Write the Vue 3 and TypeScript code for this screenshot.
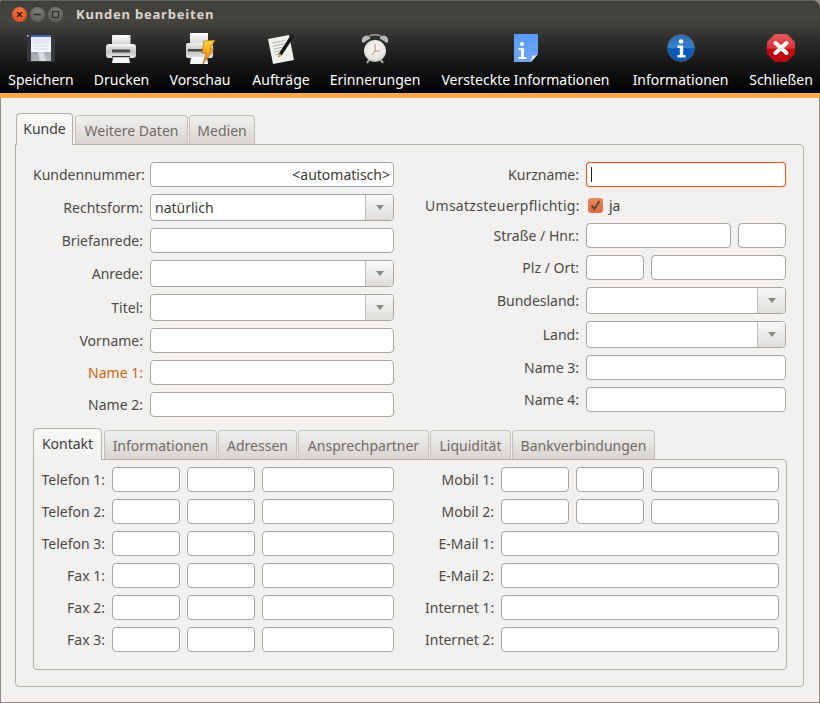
<script setup lang="ts">
interface Row { label: string; kind: 'input' | 'combo' | 'check' | 'multi'; value?: string; accent?: boolean; focus?: boolean; right?: boolean; wide?: boolean; fields?: number[] }

const outerTabs = [
  { label: 'Kunde', w: 57, active: true },
  { label: 'Weitere Daten', w: 113 },
  { label: 'Medien', w: 66 },
]
const innerTabs = [
  { label: 'Kontakt', w: 69, active: true },
  { label: 'Informationen', w: 113 },
  { label: 'Adressen', w: 79 },
  { label: 'Ansprechpartner', w: 131 },
  { label: 'Liquidität', w: 81 },
  { label: 'Bankverbindungen', w: 143 },
]
const leftRows: Row[] = [
  { label: 'Kundennummer:', kind: 'input', value: '<automatisch>', right: true },
  { label: 'Rechtsform:', kind: 'combo', value: 'natürlich' },
  { label: 'Briefanrede:', kind: 'input' },
  { label: 'Anrede:', kind: 'combo' },
  { label: 'Titel:', kind: 'combo' },
  { label: 'Vorname:', kind: 'input' },
  { label: 'Name 1:', kind: 'input', accent: true },
  { label: 'Name 2:', kind: 'input' },
]
const rightRows: Row[] = [
  { label: 'Kurzname:', kind: 'input', focus: true },
  { label: 'Umsatzsteuerpflichtig:', kind: 'check', wide: true },
  { label: 'Straße / Hnr.:', kind: 'multi', fields: [145, 48] },
  { label: 'Plz / Ort:', kind: 'multi', fields: [58, 135] },
  { label: 'Bundesland:', kind: 'combo' },
  { label: 'Land:', kind: 'combo' },
  { label: 'Name 3:', kind: 'input' },
  { label: 'Name 4:', kind: 'input' },
]
const contactLeft = [
  { label: 'Telefon 1:', fields: [68, 68, 132] },
  { label: 'Telefon 2:', fields: [68, 68, 132] },
  { label: 'Telefon 3:', fields: [68, 68, 132] },
  { label: 'Fax 1:', fields: [68, 68, 132] },
  { label: 'Fax 2:', fields: [68, 68, 132] },
  { label: 'Fax 3:', fields: [68, 68, 132] },
]
const contactRight = [
  { label: 'Mobil 1:', fields: [68, 68, 128] },
  { label: 'Mobil 2:', fields: [68, 68, 128] },
  { label: 'E-Mail 1:', fields: [278] },
  { label: 'E-Mail 2:', fields: [278] },
  { label: 'Internet 1:', fields: [278] },
  { label: 'Internet 2:', fields: [278] },
]
</script>

<template>
  <div class="window">
    <header class="chrome">
      <div class="titlebar">
        <div class="controls">
          <span class="ctl close">
            <svg width="15" height="15" viewBox="0 0 15 15"><path d="M5 5l5 5M10 5l-5 5" stroke="#3a1408" stroke-width="1.4" fill="none" /></svg>
          </span>
          <span class="ctl">
            <svg width="15" height="15" viewBox="0 0 15 15"><path d="M4 7.5h7" stroke="#2e2d2a" stroke-width="1.6" fill="none" /></svg>
          </span>
          <span class="ctl">
            <svg width="15" height="15" viewBox="0 0 15 15"><rect x="4.5" y="4.5" width="6" height="6" stroke="#2e2d2a" stroke-width="1.3" fill="none" /></svg>
          </span>
        </div>
        <div class="title">Kunden bearbeiten</div>
      </div>
      <nav class="toolbar">
        <div class="tool">
          <svg class="ico" viewBox="0 0 32 32">
            <defs>
              <linearGradient id="fl" x1="0" y1="0" x2="0" y2="1"><stop offset="0" stop-color="#e6ebf4" /><stop offset="1" stop-color="#f6f7fa" /></linearGradient>
              <linearGradient id="fs" x1="0" y1="0" x2="1" y2="1"><stop offset="0" stop-color="#9da1a7" /><stop offset="1" stop-color="#b9bcc1" /></linearGradient>
            </defs>
            <path d="M3 2h25.500a1.500 1.500 0 0 1 1.500 1.500v24a1.500 1.500 0 0 1-1.500 1.500h-25a1.500 1.500 0 0 1-1.500-1.500v-24z" fill="#34373c" />
            <rect x="6" y="2" width="20" height="17" fill="url(#fl)" />
            <rect x="6" y="2" width="20" height="2" fill="#3f6cab" />
            <path d="M8 7h16M8 10h16M8 13h16M8 16h16" stroke="#d5dcea" stroke-width="1" />
            <rect x="6" y="19" width="20" height="9" fill="url(#fs)" />
            <path d="M13 19h6l2 9h-6z" fill="#d6dbe6" />
            <rect x="2" y="2" width="1.500" height="1.500" fill="#c5c8cd" />
          </svg>
          <span>Speichern</span>
        </div>
        <div class="tool">
          <svg class="ico" viewBox="0 0 32 32">
            <defs>
              <linearGradient id="pb" x1="0" y1="0" x2="0" y2="1"><stop offset="0" stop-color="#f1f1f0" /><stop offset=".55" stop-color="#c2c2c0" /><stop offset="1" stop-color="#e6e6e4" /></linearGradient>
              <linearGradient id="pp" x1="0" y1="0" x2="0" y2="1"><stop offset="0" stop-color="#ffffff" /><stop offset="1" stop-color="#cfcfcf" /></linearGradient>
            </defs>
            <rect x="6" y="2" width="18.500" height="11" rx="1" fill="url(#pp)" />
            <rect x="0" y="11" width="30" height="14" rx="3" fill="url(#pb)" />
            <rect x="6" y="16.500" width="18" height="3" fill="#4a4a48" />
            <rect x="2" y="12" width="26" height="1" fill="#fff" opacity=".7" />
            <rect x="6" y="23" width="18" height="1.500" fill="#333" />
            <path d="M7 24.500h16l1 5.500h-18z" fill="#f7f7f7" />
          </svg>
          <span>Drucken</span>
        </div>
        <div class="tool">
          <svg class="ico" viewBox="0 0 32 32">
            <defs>
              <linearGradient id="pv" x1="0" y1="0" x2="0" y2="1"><stop offset="0" stop-color="#ffd53a" /><stop offset=".6" stop-color="#f59a18" /><stop offset="1" stop-color="#e57a10" /></linearGradient>
            </defs>
            <rect x="6" y="0" width="18" height="12" fill="url(#pp)" />
            <rect x="2" y="10" width="27" height="15" rx="2" fill="url(#pb)" />
            <rect x="4" y="16" width="22" height="2.500" fill="#4a4a48" />
            <path d="M7 24h16l1 7h-18z" fill="#f7f7f7" />
            <path d="M20 8l11-1-5 9h4l-11 15 3-11h-4z" fill="url(#pv)" stroke="#a85a10" stroke-width=".6" />
          </svg>
          <span>Vorschau</span>
        </div>
        <div class="tool">
          <svg class="ico" viewBox="0 0 32 32">
            <path d="M3 6L24 2l5 25-21 4z" fill="#f0f1ed" />
            <path d="M7 10l13-2.500M8 13l13-2.500M8.500 16l9-1.700M9 19l7-1.300M10 22l4-.8" stroke="#a9aba6" stroke-width=".9" />
            <path d="M26.500 1l3 2L17 22l-3.500 2.500.4-4z" fill="#16161a" />
            <path d="M14 20.500l3 1.700-3.500 2.300-1 1.500z" fill="#d9b36a" />
            <path d="M25.500 2.500l2.500 1.700" stroke="#555" stroke-width=".6" />
          </svg>
          <span>Aufträge</span>
        </div>
        <div class="tool">
          <svg class="ico" viewBox="0 0 32 32">
            <defs>
              <radialGradient id="cl" cx=".5" cy=".4" r=".6"><stop offset="0" stop-color="#fbfaf8" /><stop offset=".8" stop-color="#e6e4df" /><stop offset="1" stop-color="#b0aeaa" /></radialGradient>
            </defs>
            <path d="M11 5a4 4 0 0 0-7 4.500zM21 5a4 4 0 0 1 7 4.500z" fill="#b5b5b3" stroke="#ddd" stroke-width=".8" />
            <path d="M9 4c2-3 12-3 14 0" stroke="#9e9e9c" stroke-width="1.300" fill="none" />
            <path d="M10 27l-2 3M22 27l2 3" stroke="#b5b5b3" stroke-width="2" />
            <circle cx="16" cy="18" r="11" fill="url(#cl)" />
            <path d="M16 11v7h5M16 18l-3 4" stroke="#c87a74" stroke-width="1" fill="none" />
          </svg>
          <span>Erinnerungen</span>
        </div>
        <div class="tool">
          <svg class="ico" viewBox="0 0 32 32">
            <defs>
              <linearGradient id="nt" x1="0" y1="0" x2="0" y2="1"><stop offset="0" stop-color="#5a9bf6" /><stop offset="1" stop-color="#6ea9f5" /></linearGradient>
            </defs>
            <path d="M4 1h24v20l-7 8H4z" fill="url(#nt)" />
            <path d="M28 21c-2 2-5 2-6 1 0 2-.5 5-1 7z" fill="#e8e8e6" />
            <circle cx="12" cy="11" r="2.100" fill="#fff" />
            <path d="M8.500 15h5.500v9h2.500v2h-8v-2h2.500v-7h-2.500z" fill="#fff" />
          </svg>
          <span>Versteckte Informationen</span>
        </div>
        <div class="tool">
          <svg class="ico" viewBox="0 0 32 32">
            <defs>
              <linearGradient id="ib" x1="0" y1="0" x2="0" y2="1"><stop offset="0" stop-color="#2f6cb3" /><stop offset=".5" stop-color="#3a80cc" /><stop offset=".52" stop-color="#0a5cc0" /><stop offset="1" stop-color="#0b55a8" /></linearGradient>
            </defs>
            <circle cx="16" cy="15" r="13.500" fill="url(#ib)" stroke="#5d6f83" stroke-width=".6" />
            <circle cx="16" cy="8.500" r="2.300" fill="#fff" />
            <path d="M12.500 12.500h5.700v9.500h2.300v2.500h-8v-2.500h2.300v-7h-2.300z" fill="#fff" />
          </svg>
          <span>Informationen</span>
        </div>
        <div class="tool">
          <svg class="ico" viewBox="0 0 32 32">
            <defs>
              <linearGradient id="rd" x1="0" y1="0" x2="0" y2="1"><stop offset="0" stop-color="#e05a5e" /><stop offset=".5" stop-color="#d8343a" /><stop offset=".55" stop-color="#c3060e" /><stop offset="1" stop-color="#b50a10" /></linearGradient>
            </defs>
            <path d="M10 1h12l8 8v12l-8 8H10l-8-8V9z" fill="url(#rd)" />
            <path d="M10.500 10l11 10M21.500 10L10.500 20" stroke="#fff" stroke-width="4" stroke-linecap="round" />
          </svg>
          <span>Schließen</span>
        </div>
      </nav>
      <div class="band"></div>
    </header>

    <main class="body">
      <div class="tabs">
        <div v-for="t in outerTabs" :key="t.label" class="tab" :class="{ active: t.active }" :style="{ width: t.w + 'px' }">{{ t.label }}</div>
      </div>
      <section class="panel outer">
        <div class="form">
          <div class="col col-left">
            <template v-for="r in leftRows" :key="r.label">
              <label class="lbl" :class="{ accent: r.accent }">{{ r.label }}</label>
              <div v-if="r.kind === 'combo'" class="combo">
                <span class="combo-text">{{ r.value }}</span>
                <span class="combo-btn"><i class="arrow"></i></span>
              </div>
              <div v-else class="input" :class="{ right: r.right }">{{ r.value }}</div>
            </template>
          </div>
          <div class="col col-right">
            <template v-for="r in rightRows" :key="r.label">
              <label class="lbl" :class="{ wide: r.wide }">{{ r.label }}</label>
              <div v-if="r.kind === 'combo'" class="combo">
                <span class="combo-text"></span>
                <span class="combo-btn"><i class="arrow"></i></span>
              </div>
              <div v-else-if="r.kind === 'check'" class="check-row">
                <span class="check">
                  <svg width="15" height="15" viewBox="0 0 15 15"><path d="M3.500 7.500l3 3.500 5-8" stroke="#5a453a" stroke-width="2" fill="none" /></svg>
                </span>
                <span>ja</span>
              </div>
              <div v-else-if="r.kind === 'multi'" class="multi">
                <div v-for="(w, i) in r.fields" :key="i" class="input" :style="{ width: w + 'px' }"></div>
              </div>
              <div v-else class="input" :class="{ focus: r.focus }"><i v-if="r.focus" class="caret"></i></div>
            </template>
          </div>
        </div>

        <div class="tabs inner-tabs">
          <div v-for="t in innerTabs" :key="t.label" class="tab" :class="{ active: t.active }" :style="{ width: t.w + 'px' }">{{ t.label }}</div>
        </div>
        <section class="panel inner">
          <div class="contact">
            <div class="ccol ccol-left">
              <template v-for="r in contactLeft" :key="r.label">
                <label class="lbl">{{ r.label }}</label>
                <div class="multi">
                  <div v-for="(w, i) in r.fields" :key="i" class="input" :style="{ width: w + 'px' }"></div>
                </div>
              </template>
            </div>
            <div class="ccol ccol-right">
              <template v-for="r in contactRight" :key="r.label">
                <label class="lbl">{{ r.label }}</label>
                <div class="multi">
                  <div v-for="(w, i) in r.fields" :key="i" class="input" :style="{ width: w + 'px' }"></div>
                </div>
              </template>
            </div>
          </div>
        </section>
      </section>
    </main>
  </div>
</template>

<style>
html, body { margin: 0; background: #8f8c86; }
</style>

<style scoped>
.window {
  width: 820px;
  height: 703px;
  display: flex;
  flex-direction: column;
  box-sizing: border-box;
  overflow: hidden;
  font-family: "Noto Sans", "Open Sans", sans-serif;
  font-size: 14px;
  color: #3c3c3c;
  background: #f2f1f0;
  border-radius: 3px 8px 0 0;
}
.chrome {
  background: linear-gradient(#3f3e3a 0, #47453f 20px, #3a3936 30px, #2b2b2a 42px, #161616 65px, #000 92px);
  box-shadow: inset 0 1px 0 #65635d;
}
.titlebar { height: 28px; display: flex; align-items: center; position: relative; }
.controls { display: flex; gap: 3px; margin-left: 12px; }
.ctl {
  width: 15px; height: 15px; border-radius: 50%;
  background: radial-gradient(circle at 50% 30%, #807f79, #565550);
  display: block; margin-top: 1px;
}
.ctl svg { display: block; }
.close { background: radial-gradient(circle at 50% 30%, #f47a45, #d8431c); }
.title {
  margin-left: 13px; font-weight: 700; font-size: 13px; letter-spacing: .8px; color: #d9d5cb;
}
.toolbar {
  display: grid;
  grid-template-columns: 66px 55px 62px 60px 88px 173px 97px 64px;
  column-gap: 20px;
  padding: 5px 0 0 8px;
  height: 65px;
  box-sizing: border-box;
}
.tool {
  display: flex; flex-direction: column; align-items: center;
  color: #fff; white-space: nowrap; font-size: 14px; line-height: 20px;
}
.ico { width: 32px; height: 32px; display: block; margin-bottom: 5px; filter: blur(.3px); }
.band { height: 5px; background: #fba94b; }
.body {
  flex: 1; display: flex; flex-direction: column; min-height: 0;
  padding: 15px 15px 15px 14px;
  border: solid #8f8c86;
  border-width: 0 1px 1px 1px;
}
.tabs { display: flex; gap: 1px; align-items: flex-end; margin-left: 1px; position: relative; z-index: 1; }
.tab {
  box-sizing: border-box;
  height: 29px;
  text-align: center;
  line-height: 29px;
  border: 1px solid #c3c0bb;
  border-bottom: 0;
  border-radius: 4px 4px 0 0;
  background: linear-gradient(#f1f0ef, #d8d5d1);
  color: #6f6b66;
  white-space: nowrap;
}
.tab.active {
  height: 32px; line-height: 30px; color: #3c3c3c;
  background: linear-gradient(#f9f9f8, #f2f1f0);
  border-color: #b3b0ab;
  margin-bottom: -1px;
  margin-right: 1px;
}
.panel {
  border: 1px solid #b3b0ab;
  border-radius: 0 4px 4px 4px;
  box-sizing: border-box;
}
.outer { flex: 1; padding: 17px 17px 0 17px; }
.form { display: flex; gap: 31px; height: 266px; }
.col { display: grid; align-content: start; column-gap: 7px; row-gap: 7px; width: 361px; }
.col-left { grid-template-columns: 110px 244px; }
.col-right { grid-template-columns: 154px 200px; }
.lbl { text-align: right; align-self: center; white-space: nowrap; color: #4c4a47; }
.lbl.accent { color: #ca6610; }
.lbl.wide { letter-spacing: .28px; }
.input {
  box-sizing: border-box; height: 25px;
  border: 1px solid #aaa69f; border-radius: 4px;
  background: #fff; padding: 0 3px 0 4px;
  line-height: 23px; color: #3c3c3c; white-space: nowrap;
}
.input.right { text-align: right; }
.input.focus { border-color: #dd5c2a; display: flex; align-items: center; box-shadow: 0 0 1px #dd5c2a; }
.caret { width: 1px; height: 15px; background: #222; display: block; }
.combo {
  box-sizing: border-box; height: 27px; display: flex;
  border: 1px solid #aaa69f; border-radius: 4px; background: #fff; overflow: hidden;
}
.combo-text { flex: 1; padding-left: 4px; line-height: 25px; }
.combo-btn {
  width: 27px; border-left: 1px solid #c0bdb8;
  background: linear-gradient(#faf9f9, #dfddda);
  display: flex; align-items: center; justify-content: center;
}
.arrow { width: 0; height: 0; border: 4.500px solid transparent; border-top: 5px solid #8a8884; border-bottom: 0; display: block; }
.check-row { display: flex; align-items: center; height: 22px; gap: 6px; }
.check {
  width: 15px; height: 15px; margin-left: 2px; border-radius: 3px;
  background: linear-gradient(#e98a5f, #dd6c3e); border: 0; display: block;
}
.check svg { display: block; }
.multi { display: flex; gap: 7px; }
.inner-tabs { margin-left: 0; margin-top: 0; }
.inner { height: 211px; padding: 7px 7px 0 6px; width: 754px; }
.contact { display: flex; gap: 31px; }
.ccol { display: grid; align-content: start; column-gap: 7px; row-gap: 7px; }
.ccol-left { grid-template-columns: 65px 282px; width: 354px; }
.ccol-right { grid-template-columns: 69px 278px; width: 354px; }
</style>
